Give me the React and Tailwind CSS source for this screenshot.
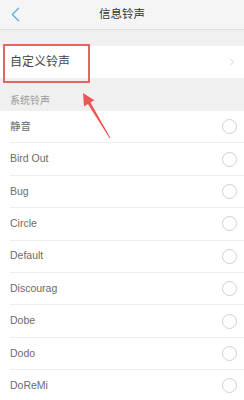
import { ChevronLeft, ChevronRight } from 'lucide-react';

const ringtones = ["静音", "Bird Out", "Bug", "Circle", "Default", "Discourag", "Dobe", "Dodo", "DoReMi"];

const font = { fontFamily: '"Liberation Sans", "Noto Sans CJK SC", sans-serif' };

const ToneRow = ({ name }) => (
  <div className="h-[32.4px] bg-white pl-[10px] shrink-0">
    <div className="h-full flex items-center justify-between border-b border-[#eeeeee] pr-[7px]">
      <span className="text-[10.5px] text-[#6b6b6b]">{name}</span>
      <div className="w-[15px] h-[15px] rounded-full border border-[#d0d0d0]" />
    </div>
  </div>
);

export default function App() {
  return (
    <div className="relative w-[244px] h-[400px] overflow-hidden bg-[#f0f0f0] flex flex-col" style={font}>
      <div className="h-[30px] shrink-0 bg-[#f5f5f5] border-b border-[#dedede] relative flex items-center justify-center">
        <ChevronLeft size={25} strokeWidth={1.2} className="absolute left-[3px] text-[#58b0e0]" />
        <span className="text-[11.5px] text-[#333]">信息铃声</span>
      </div>

      <div className="h-[16px] shrink-0" />

      <div className="h-[32px] shrink-0 bg-white flex items-center justify-between pl-[10px] pr-[6px]">
        <span className="text-[12px] text-[#444]">自定义铃声</span>
        <ChevronRight size={12} strokeWidth={1.5} className="text-[#c4c4c4]" />
      </div>

      <div className="h-[33px] shrink-0 flex items-end pb-[3px] pl-[10px]">
        <span className="text-[10px] text-[#999]">系统铃声</span>
      </div>

      {ringtones.map((t) => (
        <ToneRow key={t} name={t} />
      ))}

      <div className="absolute left-[3px] top-[44px] w-[87px] h-[39px] border-2 border-[#e86464]" />
      <svg className="absolute left-0 top-0" width="244" height="400" viewBox="0 0 244 400">
        <polygon
          points="83,93 94.3,100.2 90.5,102.5 110.4,137.7 109.6,138.3 87.9,104.1 84.1,106.4"
          fill="#ea5555"
        />
      </svg>
    </div>
  );
}
